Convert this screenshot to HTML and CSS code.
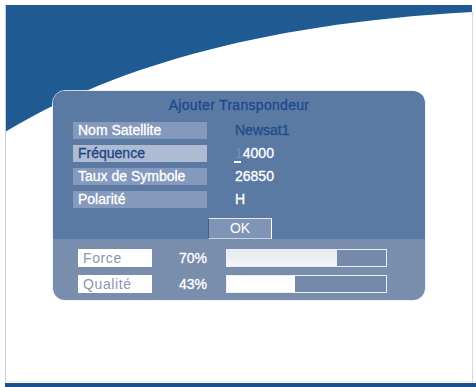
FILE: index.html
```html
<!DOCTYPE html>
<html>
<head>
<meta charset="utf-8">
<link rel="stylesheet" href="styles.css">
</head>
<body>
<div class="screen">
  <svg class="bg" width="476" height="387" viewBox="0 0 476 387">
    <rect x="0" y="0" width="476" height="387" fill="#ffffff"/>
    <path d="M5,5 L472,5 L472,12 C250,24 105,72 5,132 Z" fill="#1f5a92"/>
    <line x1="5.5" y1="5" x2="5.5" y2="383" stroke="#c9ccd2" stroke-width="1"/>
    <line x1="472.5" y1="12" x2="472.5" y2="383" stroke="#d3d8e0" stroke-width="1"/>
    <line x1="5" y1="381.5" x2="476" y2="381.5" stroke="#e4e7ec" stroke-width="1"/>
    <rect x="5" y="383" width="471" height="4" fill="#1b4f89"/>
  </svg>
  <div class="panel">
    <div class="upper">
      <div class="title">Ajouter Transpondeur</div>
      <div class="rows">
        <div class="row"><div class="label">Nom Satellite</div><div class="value dark">Newsat1</div></div>
        <div class="row"><div class="label selected">Fréquence</div><div class="value"><span class="cursor">1</span>4000</div></div>
        <div class="row"><div class="label">Taux de Symbole</div><div class="value">26850</div></div>
        <div class="row"><div class="label">Polarité</div><div class="value">H</div></div>
      </div>
      <div class="ok">OK</div>
    </div>
    <div class="lower">
      <div class="meter"><div class="mlabel">Force</div><div class="pct">70%</div><div class="bar"><div class="fill force" style="width:69%"></div></div></div>
      <div class="meter"><div class="mlabel">Qualité</div><div class="pct">43%</div><div class="bar"><div class="fill" style="width:43%"></div></div></div>
    </div>
  </div>
</div>
</body>
</html>
```
FILE: styles.css
```css
html, body {
  margin: 0;
  padding: 0;
  background: #ffffff;
}
.screen {
  position: relative;
  width: 476px;
  height: 387px;
  overflow: hidden;
  font-family: "Liberation Sans", Arial, sans-serif;
}
.bg {
  position: absolute;
  left: 0;
  top: 0;
}
.panel {
  position: relative;
  margin: 90px 0 0 52px;
  width: 372px;
  border: 1px solid rgba(235, 240, 248, 0.85);
  border-radius: 13px;
  overflow: hidden;
  display: flex;
  flex-direction: column;
}
.upper {
  background: #5b7aa3;
  display: flex;
  flex-direction: column;
  align-items: center;
}
.title {
  height: 31px;
  line-height: 28px;
  font-size: 14px;
  color: #1b4a8c;
  letter-spacing: 0.3px;
  text-align: center;
  align-self: stretch;
  -webkit-text-stroke: 0.3px #1b4a8c;
}
.rows {
  align-self: stretch;
  display: flex;
  flex-direction: column;
  gap: 6px;
  padding-left: 20px;
}
.row {
  display: flex;
  align-items: center;
  height: 17px;
}
.label {
  width: 129px;
  height: 17px;
  line-height: 17px;
  padding-left: 5px;
  background: #8499bb;
  color: #ffffff;
  font-size: 14px;
  -webkit-text-stroke: 0.3px #ffffff;
}
.label.selected {
  background: #aebcd3;
  color: #1d4580;
  -webkit-text-stroke: 0.3px #1d4580;
}
.value {
  margin-left: 28px;
  font-size: 14px;
  color: #ffffff;
  line-height: 17px;
  -webkit-text-stroke: 0.3px #ffffff;
}
.value.dark {
  color: #1e4d8d;
  -webkit-text-stroke: 0.3px #1e4d8d;
}
.cursor {
  position: relative;
  color: #7890b6;
  -webkit-text-stroke: 0;
}
.cursor::after {
  content: "";
  position: absolute;
  left: -1px;
  bottom: -2px;
  width: 7px;
  height: 2px;
  background: #ffffff;
}
.ok {
  margin-top: 10px;
  margin-left: 2px;
  width: 62px;
  height: 19px;
  line-height: 19px;
  text-align: center;
  font-size: 14px;
  color: #ffffff;
  background: #8094b6;
  border-top: 1px solid #e3e8f0;
  border-right: 1px solid #ffffff;
  border-left: 1px solid #3f6190;
  border-bottom: 1px solid #c8d2e2;
}
.lower {
  background: #798dad;
  padding: 10px 0 7px 25px;
  display: flex;
  flex-direction: column;
  gap: 8px;
}
.meter {
  display: flex;
  align-items: center;
  height: 18px;
}
.mlabel {
  width: 69px;
  height: 18px;
  line-height: 18px;
  padding-left: 5px;
  background: #ffffff;
  color: #8797b2;
  font-size: 14px;
  letter-spacing: 0.6px;
}
.pct {
  width: 47px;
  padding-left: 27px;
  color: #ffffff;
  font-size: 14px;
  -webkit-text-stroke: 0.3px #ffffff;
}
.bar {
  width: 159px;
  height: 16px;
  border: 1px solid #e9edf4;
  background: #7589ab;
  display: flex;
}
.fill {
  height: 100%;
  background: #ffffff;
}
.fill.force {
  background: linear-gradient(#e6e9ee, #f4f5f7);
}
```
